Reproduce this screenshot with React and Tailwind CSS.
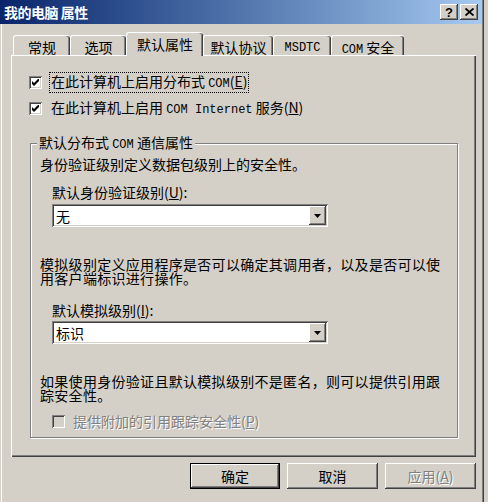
import React from 'react';

const raised =
  'shadow-[inset_-1px_-1px_#404040,inset_1px_1px_#fff,inset_-2px_-2px_#808080]';
const sunken =
  'shadow-[inset_1px_1px_#808080,inset_-1px_-1px_#fff,inset_2px_2px_#404040,inset_-2px_-2px_#d4d0c8]';
const mono = "font-['Liberation_Mono',monospace] text-[12px]";

function Check({ checked, disabled }) {
  return (
    <span
      className={`w-[13px] h-[13px] shrink-0 flex items-center justify-center ${
        disabled ? 'bg-[#d4d0c8]' : 'bg-white'
      } ${sunken}`}
    >
      {checked && (
        <svg width="7" height="7" viewBox="0 0 7 7">
          <path d="M0 2L2 4L7 -1V2L2 7L0 5Z" fill="#000" />
        </svg>
      )}
    </span>
  );
}

function Combo({ value }) {
  return (
    <div className={`w-[276px] h-[23px] bg-white flex items-center p-[2px] ${sunken}`}>
      <span className="flex-1 pl-[2px] leading-[16px]">{value}</span>
      <span className={`w-[17px] h-[19px] bg-[#d4d0c8] flex items-center justify-center ${raised}`}>
        <svg width="7" height="4" viewBox="0 0 7 4">
          <path d="M0 0H7L3.5 4Z" fill="#000" />
        </svg>
      </span>
    </div>
  );
}

function Tab({ label, width, active }) {
  if (active) {
    return (
      <div
        className={`${width} h-[24px] -mb-px relative z-10 bg-[#d4d0c8] rounded-t-[3px] border-t border-l border-white shadow-[inset_-1px_0_#404040,inset_-2px_0_#808080] flex justify-center pt-[3px] leading-[16px]`}
      >
        {label}
      </div>
    );
  }
  return (
    <div
      className={`${width} h-[20px] bg-[#d4d0c8] rounded-t-[3px] border-t border-l border-white shadow-[inset_-1px_0_#404040,inset_-2px_0_#808080] flex justify-center pt-[3px] leading-[16px]`}
    >
      {label}
    </div>
  );
}

function Button({ children, isDefault, disabled }) {
  const frame = isDefault
    ? 'shadow-[inset_0_0_0_1px_#000,inset_-2px_-2px_#404040,inset_2px_2px_#fff,inset_-3px_-3px_#808080]'
    : raised;
  return (
    <div
      className={`h-[26px] flex items-center justify-center bg-[#d4d0c8] ${frame} ${
        disabled ? 'text-[#808080] [text-shadow:1px_1px_0_#fff]' : 'text-black'
      } ${isDefault ? 'w-[90px]' : 'w-[91px]'}`}
    >
      {children}
    </div>
  );
}

export default function App() {
  return (
    <div className="w-[488px] h-[502px] bg-[#d4d0c8] overflow-hidden font-['Noto_Sans_CJK_SC',sans-serif] text-[14px] text-black">
      <div className="w-[484px] h-full flex flex-col shadow-[inset_-1px_0_#404040,inset_-2px_0_#808080]">
        {/* title bar */}
        <div className="w-[482px] h-[24px] shrink-0 bg-linear-to-r from-[#0a246a] to-[#a6caf0] flex items-center pl-[4px] pr-[4px]">
          <span className="text-white font-bold leading-[16px] tracking-[-0.5px]">我的电脑 属性</span>
          <div className="ml-auto flex gap-[2px]">
            <span className={`w-[18px] h-[16px] bg-[#d4d0c8] ${raised} flex items-center justify-center font-['Liberation_Sans',sans-serif] font-bold text-[13px] leading-none`}>
              ?
            </span>
            <span className={`w-[18px] h-[16px] bg-[#d4d0c8] ${raised} flex items-center justify-center`}>
              <svg width="9" height="8" viewBox="0 0 9 8">
                <path d="M0.5 0.5L8.5 7.5M8.5 0.5L0.5 7.5" stroke="#000" strokeWidth="1.8" />
              </svg>
            </span>
          </div>
        </div>

        {/* body */}
        <div className="flex-1 flex flex-col shadow-[inset_1px_0_#d4d0c8,inset_2px_0_#fff]">
          {/* tabs */}
          <div className="h-[31px] shrink-0 flex items-end pl-[13px]">
            <Tab label="常规" width="w-[57px]" />
            <Tab label="选项" width="w-[56px]" />
            <Tab label="默认属性" width="w-[77px]" active />
            <Tab label="默认协议" width="w-[70px]" />
            <Tab label={<span className={`${mono} pt-px`}>MSDTC</span>} width="w-[58px]" />
            <Tab
              label={
                <span>
                  <span className={mono}>COM</span> 安全
                </span>
              }
              width="w-[73px]"
            />
          </div>

          {/* panel */}
          <div className="ml-[11px] w-[465px] h-[402px] shrink-0 border-t border-l border-white shadow-[inset_-1px_-1px_#404040,inset_-2px_-2px_#808080] pl-[17px] pt-[18px]">
            <div className="h-[16px] flex items-center">
              <Check checked />
              <span className="ml-[8px] leading-[16px] outline-1 outline-dotted outline-black px-px">
                在此计算机上启用分布式 <span className={mono}>COM</span>(<span className="underline">E</span>)
              </span>
            </div>
            <div className="h-[16px] mt-[10px] flex items-center">
              <Check checked />
              <span className="ml-[9px] leading-[16px]">
                在此计算机上启用 <span className={mono}>COM Internet</span> 服务(<span className="underline">N</span>)
              </span>
            </div>

            <fieldset className="mt-[18px] ml-px w-[428px] border border-[#808080] shadow-[inset_1px_1px_#fff,1px_1px_#fff] pb-[8px]">
              <legend className="ml-[6px] px-[2px] leading-[16px] bg-[#d4d0c8]">
                默认分布式 <span className={mono}>COM</span> 通信属性
              </legend>
              <div className="pl-[9px] mt-[3px] leading-[16px] whitespace-nowrap">
                身份验证级别定义数据包级别上的安全性。
              </div>
              <div className="pl-[21px] mt-[12px] leading-[16px]">
                默认身份验证级别(<span className="underline">U</span>):
              </div>
              <div className="pl-[21px] mt-[4px]">
                <Combo value="无" />
              </div>
              <div className="pl-[9px] mt-[30px] leading-[14px] whitespace-nowrap tracking-[0.3px]">
                模拟级别定义应用程序是否可以确定其调用者，以及是否可以使
                <br />
                用客户端标识进行操作。
              </div>
              <div className="pl-[21px] mt-[17px] leading-[16px]">
                默认模拟级别(<span className="underline">I</span>):
              </div>
              <div className="pl-[21px] mt-[3px]">
                <Combo value="标识" />
              </div>
              <div className="pl-[9px] mt-[30px] leading-[14px] whitespace-nowrap tracking-[0.3px]">
                如果使用身份验证且默认模拟级别不是匿名，则可以提供引用跟
                <br />
                踪安全性。
              </div>
              <div className="pl-[21px] mt-[11px] h-[16px] flex items-center">
                <Check disabled />
                <span className="ml-[8px] leading-[16px] text-[#808080] [text-shadow:1px_1px_0_#fff]">
                  提供附加的引用跟踪安全性(<span className="underline">P</span>)
                </span>
              </div>
            </fieldset>
          </div>

          {/* buttons */}
          <div className="mt-[6px] ml-[190px] flex gap-[7px]">
            <Button isDefault>确定</Button>
            <Button>取消</Button>
            <Button disabled>
              应用(<span className="underline">A</span>)
            </Button>
          </div>
        </div>
      </div>
    </div>
  );
}
